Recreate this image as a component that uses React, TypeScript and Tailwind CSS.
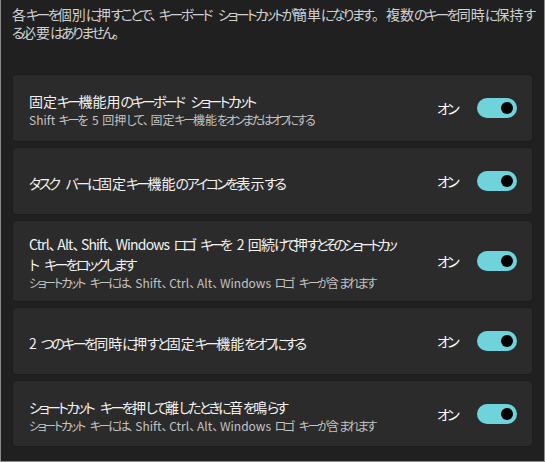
import React from "react";

const KANA = /^[\u3041-\u309F\u30A0-\u30FF]+$/;

function J({ t, tight = false }: { t: string; tight?: boolean }) {
  const parts = t.split(/([\u3041-\u309F\u30A0-\u30FF]+|、| )/).filter((p) => p !== "");
  return (
    <span className={tight ? "tracking-[-0.06em]" : ""}>
      {parts.map((p, i) => {
        if (p === " ") {
          const afterKana = i > 0 && KANA.test(parts[i - 1]);
          return (
            <span key={i} className={afterKana ? "inline-block w-[0.5em]" : "inline-block w-[0.3em]"} />
          );
        }
        if (p === "、")
          return (
            <span key={i} className={tight ? "tracking-[-0.4em]" : "tracking-[-0.35em]"}>
              {p}
            </span>
          );
        if (KANA.test(p))
          return (
            <span
              key={i}
              className={
                tight
                  ? "tracking-[-0.25em] [font-feature-settings:'palt']"
                  : "tracking-[-0.19em] [font-feature-settings:'palt']"
              }
            >
              {p}
            </span>
          );
        return <React.Fragment key={i}>{p}</React.Fragment>;
      })}
    </span>
  );
}

function Lines({ lines, tight = false }: { lines: string[]; tight?: boolean }) {
  return (
    <>
      {lines.map((l, i) => (
        <React.Fragment key={i}>
          {i > 0 && <br />}
          <J t={l} tight={tight && i === 0} />
        </React.Fragment>
      ))}
    </>
  );
}

function Toggle() {
  return (
    <div className="flex items-center shrink-0">
      <span className="text-[14px] leading-[20px] text-white mr-[20px]">
        <J t="オン" />
      </span>
      <div className="w-[40px] h-[20px] rounded-full bg-[#6fd3dc] flex items-center justify-end pr-[4px]">
        <div className="w-[12px] h-[12px] rounded-full bg-black" />
      </div>
    </div>
  );
}

type Item = { title: string[]; sub?: string; h: string; tight?: boolean };

const items: Item[] = [
  {
    title: ["固定キー機能用のキーボード ショートカット"],
    sub: "Shift キーを 5 回押して、固定キー機能をオンまたはオフにする",
    h: "h-[68px]",
  },
  { title: ["タスク バーに固定キー機能のアイコンを表示する"], h: "h-[68px]" },
  {
    title: [
      "Ctrl、Alt、Shift、Windows ロゴ キーを 2 回続けて押すとそのショートカッ",
      "ト キーをロックします",
    ],
    sub: "ショートカット キーには、Shift、Ctrl、Alt、Windows ロゴ キーが含まれます",
    h: "h-[82px]",
    tight: true,
  },
  { title: ["2 つのキーを同時に押すと固定キー機能をオフにする"], h: "h-[68px]" },
  {
    title: ["ショートカット キーを押して離したときに音を鳴らす"],
    sub: "ショートカット キーには、Shift、Ctrl、Alt、Windows ロゴ キーが含まれます",
    h: "h-[67px]",
  },
];

export default function App() {
  return (
    <div
      className="w-[545px] h-[462px] bg-[#202020] border-l border-r border-b border-[#8c8c8c] overflow-hidden"
      style={{ fontFamily: '"Noto Sans CJK JP", "Noto Sans", sans-serif' }}
    >
      <div className="pl-[11px] pr-[11px] pt-[5px]">
        <p className="text-[14px] leading-[18px] text-[#d0d0d0] whitespace-nowrap">
          <Lines
            lines={[
              "各キーを個別に押すことで、キーボード ショートカットが簡単になります。複数のキーを同時に保持す",
              "る必要はありません。",
            ]}
          />
        </p>
        <div className="mt-[33px] flex flex-col gap-[5px]">
          {items.map((it, i) => (
            <div
              key={i}
              className={`${it.h} rounded-[4px] bg-[#2b2b2b] border border-[#1c1c1c] flex items-center justify-between pl-[16px] pr-[15px]`}
            >
              <div className="flex flex-col pt-[4px]">
                <div className="text-[14px] leading-[20px] text-[#f2f2f2] whitespace-nowrap">
                  <Lines lines={it.title} tight={it.tight} />
                </div>
                {it.sub && (
                  <div className="text-[12px] leading-[18px] text-[#c4c4c4] whitespace-nowrap">
                    <J t={it.sub} />
                  </div>
                )}
              </div>
              <Toggle />
            </div>
          ))}
        </div>
      </div>
    </div>
  );
}
